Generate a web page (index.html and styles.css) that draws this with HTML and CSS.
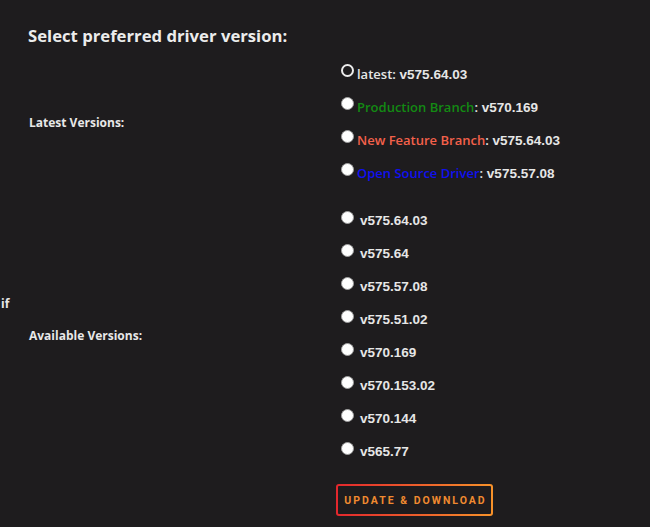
FILE: index.html
```html
<!DOCTYPE html>
<html>
<head>
<meta charset="utf-8">
<link rel="stylesheet" href="styles.css">
</head>
<body>
<div class="page">
  <div class="stray">if</div>
  <div class="content">
    <h2 class="title">Select preferred driver version:</h2>
    <div class="label">Latest Versions:</div>
    <div class="options latest">
      <label class="opt"><input type="radio" name="v" checked><span><b class="k">latest:</b> v575.64.03</span></label>
      <label class="opt"><input type="radio" name="v"><span><b class="k green">Production Branch</b><b class="k">:</b> v570.169</span></label>
      <label class="opt"><input type="radio" name="v"><span><b class="k red">New Feature Branch</b><b class="k">:</b> v575.64.03</span></label>
      <label class="opt"><input type="radio" name="v"><span><b class="k blue">Open Source Driver</b><b class="k">:</b> v575.57.08</span></label>
    </div>
    <div class="label gap">Available Versions:</div>
    <div class="options gap">
      <label class="opt"><input type="radio" name="v"><span>v575.64.03</span></label>
      <label class="opt"><input type="radio" name="v"><span>v575.64</span></label>
      <label class="opt"><input type="radio" name="v"><span>v575.57.08</span></label>
      <label class="opt"><input type="radio" name="v"><span>v575.51.02</span></label>
      <label class="opt"><input type="radio" name="v"><span>v570.169</span></label>
      <label class="opt"><input type="radio" name="v"><span>v570.153.02</span></label>
      <label class="opt"><input type="radio" name="v"><span>v570.144</span></label>
      <label class="opt"><input type="radio" name="v"><span>v565.77</span></label>
    </div>
    <div class="actions">
      <button class="btn">UPDATE &amp; DOWNLOAD</button>
    </div>
  </div>
</div>
</body>
</html>
```
FILE: styles.css
```css
html, body {
  margin: 0;
  padding: 0;
  background: #1e1c1e;
  color: #e8e8e8;
  height: 100%;
}
.page {
  display: grid;
  grid-template-columns: 28px 1fr;
  font-family: "Liberation Sans", Arial, sans-serif;
}
.stray {
  font-family: "Open Sans", sans-serif;
  font-weight: 700;
  font-size: 12px;
  color: #e8e8e8;
  padding-top: 295px;
  padding-left: 1px;
}
.content {
  display: grid;
  grid-template-columns: 309px 1fr;
  align-items: center;
}
.title {
  grid-column: 1 / 3;
  margin: 0;
  padding-top: 24px;
  height: 32px;
  font-family: "Open Sans", sans-serif;
  font-weight: 700;
  font-size: 16.7px;
  line-height: 24px;
  color: #ececec;
}
.label {
  font-family: "Open Sans", sans-serif;
  font-weight: 700;
  font-size: 12px;
  color: #e8e8e8;
  padding-left: 1px;
}
.options {
  display: flex;
  flex-direction: column;
}
.gap {
  margin-top: 15px;
}
.opt {
  height: 33px;
  display: flex;
  align-items: center;
  font-size: 13.5px;
  font-weight: 700;
  color: #e6e6e6;
}
.opt span {
  padding-top: 2px;
}
.opt input {
  appearance: none;
  -webkit-appearance: none;
  width: 13px;
  height: 13px;
  margin: 0 6px 4px 4px;
  border-radius: 50%;
  background: #ffffff;
  border: 1px solid #a0a0a0;
  box-sizing: border-box;
  flex: none;
}
.latest .opt input {
  margin-right: 3px;
}
.opt input:checked {
  background: #1e1c1e;
  border: 2px solid #ececec;
}
.k {
  font-family: "Open Sans", sans-serif;
  font-weight: 600;
  font-size: 13px;
}
.green { color: #138a13; }
.red { color: #f4614b; }
.blue { color: #1010f0; }
.actions {
  grid-column: 2;
  padding-top: 17px;
}
.btn {
  width: 157px;
  height: 32px;
  box-sizing: border-box;
  border: 2px solid transparent;
  border-radius: 3px;
  background: linear-gradient(#1e1c1e, #1e1c1e) padding-box,
              linear-gradient(90deg, #e3272d, #f7922a) border-box;
  color: #f08a30;
  font-family: Roboto, sans-serif;
  font-weight: 700;
  font-size: 10.5px;
  letter-spacing: 2px;
  padding: 0 0 0 2px;
  margin-left: -1px;
  cursor: pointer;
}
```
